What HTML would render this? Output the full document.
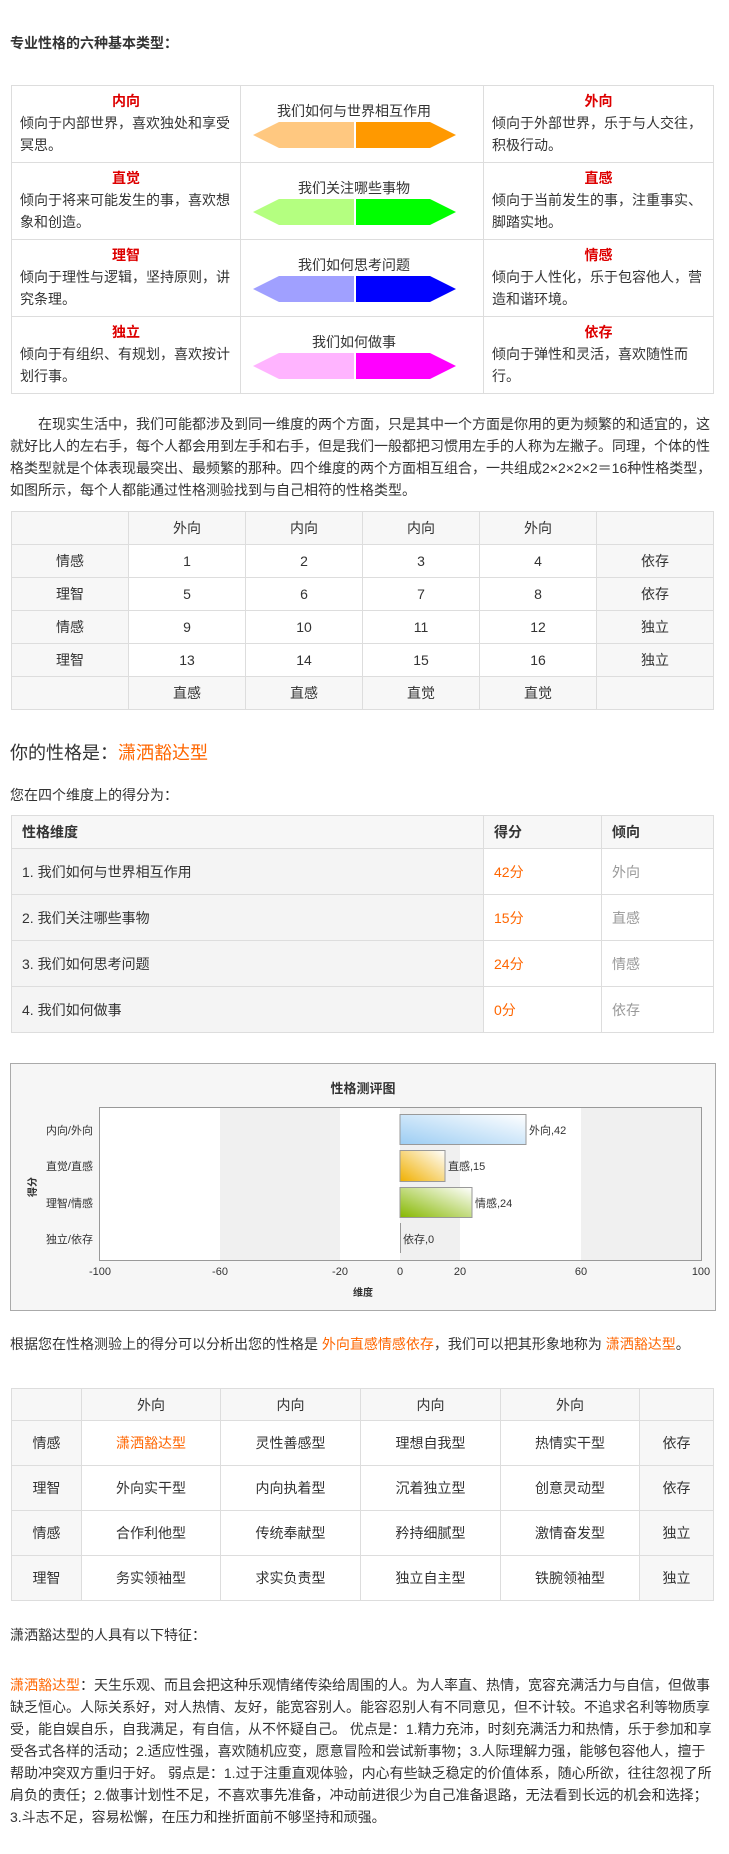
<!DOCTYPE html>
<html><head><meta charset="utf-8">
<style>
*{margin:0;padding:0;box-sizing:border-box}
body{width:729px;height:1854px;background:#fff;position:relative;font-family:"Liberation Sans","Noto Sans CJK SC",sans-serif;font-size:14px;color:#333;overflow:hidden}
.a{position:absolute}
table{border-collapse:collapse;position:absolute;table-layout:fixed}
td{border:1px solid #ddd}
.o{color:#f60}
.red{color:#d00;font-weight:bold}
.t1 td{vertical-align:top;padding:4px 8px 0;line-height:22px;height:77px}
.t1 td.c{padding:0}
.g{background:#f7f7f7}
.ctr td{text-align:center}
.cap{margin-top:16px;line-height:18px;text-align:center;margin-right:16px}
.arr{display:block;margin:2px 0 0 12px}
</style></head><body>
<div class="a" style="left:10px;top:33px;font-weight:bold;font-size:14px">专业性格的六种基本类型：</div>

<table class="t1" style="left:11px;top:85px;width:702px">
<colgroup><col style="width:229px"><col style="width:243px"><col style="width:230px"></colgroup>
<tr><td><div class="red" style="text-align:center">内向</div>倾向于内部世界，喜欢独处和享受冥思。</td>
<td class="c"><div class="cap">我们如何与世界相互作用</div><svg class="arr" width="203" height="26"><polygon points="0,13 26,0 101,0 101,26 26,26" fill="#ffc880"/><polygon points="103,0 177,0 203,13 177,26 103,26" fill="#f90"/></svg></td>
<td><div class="red" style="text-align:center">外向</div>倾向于外部世界，乐于与人交往，积极行动。</td></tr>
<tr><td><div class="red" style="text-align:center">直觉</div>倾向于将来可能发生的事，喜欢想象和创造。</td>
<td class="c"><div class="cap">我们关注哪些事物</div><svg class="arr" width="203" height="26"><polygon points="0,13 26,0 101,0 101,26 26,26" fill="#b4ff80"/><polygon points="103,0 177,0 203,13 177,26 103,26" fill="#0f0"/></svg></td>
<td><div class="red" style="text-align:center">直感</div>倾向于当前发生的事，注重事实、脚踏实地。</td></tr>
<tr><td><div class="red" style="text-align:center">理智</div>倾向于理性与逻辑，坚持原则，讲究条理。</td>
<td class="c"><div class="cap">我们如何思考问题</div><svg class="arr" width="203" height="26"><polygon points="0,13 26,0 101,0 101,26 26,26" fill="#a0a0ff"/><polygon points="103,0 177,0 203,13 177,26 103,26" fill="#00f"/></svg></td>
<td><div class="red" style="text-align:center">情感</div>倾向于人性化，乐于包容他人，营造和谐环境。</td></tr>
<tr><td><div class="red" style="text-align:center">独立</div>倾向于有组织、有规划，喜欢按计划行事。</td>
<td class="c"><div class="cap">我们如何做事</div><svg class="arr" width="203" height="26"><polygon points="0,13 26,0 101,0 101,26 26,26" fill="#ffb4ff"/><polygon points="103,0 177,0 203,13 177,26 103,26" fill="#f0f"/></svg></td>
<td><div class="red" style="text-align:center">依存</div>倾向于弹性和灵活，喜欢随性而行。</td></tr>
</table>

<div class="a" style="left:10px;top:413px;width:705px;line-height:22px;text-indent:28px">在现实生活中，我们可能都涉及到同一维度的两个方面，只是其中一个方面是你用的更为频繁的和适宜的，这就好比人的左右手，每个人都会用到左手和右手，但是我们一般都把习惯用左手的人称为左撇子。同理，个体的性格类型就是个体表现最突出、最频繁的那种。四个维度的两个方面相互组合，一共组成2×2×2×2＝16种性格类型，如图所示，每个人都能通过性格测验找到与自己相符的性格类型。</div>

<table class="ctr" style="left:11px;top:511px;width:702px">
<colgroup><col span="6" style="width:117px"></colgroup>
<tr style="height:33px"><td class="g"></td><td class="g">外向</td><td class="g">内向</td><td class="g">内向</td><td class="g">外向</td><td class="g"></td></tr>
<tr style="height:33px"><td class="g">情感</td><td>1</td><td>2</td><td>3</td><td>4</td><td class="g">依存</td></tr>
<tr style="height:33px"><td class="g">理智</td><td>5</td><td>6</td><td>7</td><td>8</td><td class="g">依存</td></tr>
<tr style="height:33px"><td class="g">情感</td><td>9</td><td>10</td><td>11</td><td>12</td><td class="g">独立</td></tr>
<tr style="height:33px"><td class="g">理智</td><td>13</td><td>14</td><td>15</td><td>16</td><td class="g">独立</td></tr>
<tr style="height:33px"><td class="g"></td><td class="g">直感</td><td class="g">直感</td><td class="g">直觉</td><td class="g">直觉</td><td class="g"></td></tr>
</table>

<div class="a" style="left:10px;top:740px;font-size:18px;line-height:26px">你的性格是：<span class="o">潇洒豁达型</span></div>
<div class="a" style="left:10px;top:785px">您在四个维度上的得分为：</div>

<table style="left:11px;top:815px;width:702px">
<colgroup><col style="width:472px"><col style="width:118px"><col style="width:112px"></colgroup>
<tr style="height:33px" class="g"><td style="padding-left:10px;font-weight:bold">性格维度</td><td style="padding-left:10px;font-weight:bold">得分</td><td style="padding-left:10px;font-weight:bold">倾向</td></tr>
<tr style="height:46px"><td style="padding-left:10px;background:#f4f4f4">1. 我们如何与世界相互作用</td><td class="o" style="padding-left:10px">42分</td><td style="padding-left:10px;color:#999">外向</td></tr>
<tr style="height:46px"><td style="padding-left:10px;background:#f4f4f4">2. 我们关注哪些事物</td><td class="o" style="padding-left:10px">15分</td><td style="padding-left:10px;color:#999">直感</td></tr>
<tr style="height:46px"><td style="padding-left:10px;background:#f4f4f4">3. 我们如何思考问题</td><td class="o" style="padding-left:10px">24分</td><td style="padding-left:10px;color:#999">情感</td></tr>
<tr style="height:46px"><td style="padding-left:10px;background:#f4f4f4">4. 我们如何做事</td><td class="o" style="padding-left:10px">0分</td><td style="padding-left:10px;color:#999">依存</td></tr>
</table>

<div class="a" style="left:10px;top:1063px;width:706px;height:248px;background:#f6f6f6;border:1px solid #aaa"></div>
<svg class="a" style="left:0;top:1060px" width="729" height="250" font-family="Liberation Sans,Noto Sans CJK SC,sans-serif">
<defs>
<linearGradient id="gb" x1="0" y1="1" x2="1" y2="0"><stop offset="0" stop-color="#9ccdf3"/><stop offset="1" stop-color="#fff"/></linearGradient>
<linearGradient id="gy" x1="0" y1="1" x2="1" y2="0"><stop offset="0" stop-color="#f0b000"/><stop offset="1" stop-color="#fff"/></linearGradient>
<linearGradient id="gg" x1="0" y1="1" x2="1" y2="0"><stop offset="0" stop-color="#86b800"/><stop offset="1" stop-color="#fff"/></linearGradient>
</defs>
<text x="363" y="33" text-anchor="middle" font-size="13" font-weight="bold" fill="#333">性格测评图</text>
<rect x="100" y="48" width="601" height="152" fill="#fff"/>
<rect x="220" y="48" width="120" height="152" fill="#f0f0f0"/>
<rect x="400" y="48" width="60" height="152" fill="#f0f0f0"/>
<rect x="581" y="48" width="120" height="152" fill="#f0f0f0"/>
<rect x="99.5" y="47.5" width="602" height="153" fill="none" stroke="#999"/>
<rect x="400" y="54.5" width="126" height="30" fill="url(#gb)" stroke="#999"/>
<rect x="400" y="90.5" width="45" height="31" fill="url(#gy)" stroke="#999"/>
<rect x="400" y="127.5" width="72" height="30" fill="url(#gg)" stroke="#999"/>
<line x1="400.5" y1="163" x2="400.5" y2="193" stroke="#999"/>
<g font-size="11" fill="#333">
<text x="93" y="74" text-anchor="end">内向/外向</text>
<text x="93" y="110" text-anchor="end">直觉/直感</text>
<text x="93" y="147" text-anchor="end">理智/情感</text>
<text x="93" y="183" text-anchor="end">独立/依存</text>
<text x="529" y="74">外向,42</text>
<text x="448" y="110">直感,15</text>
<text x="475" y="147">情感,24</text>
<text x="403" y="183">依存,0</text>
<g text-anchor="middle"><text x="100" y="215">-100</text><text x="220" y="215">-60</text><text x="340" y="215">-20</text><text x="400" y="215">0</text><text x="460" y="215">20</text><text x="581" y="215">60</text><text x="701" y="215">100</text></g>
<text x="363" y="236" text-anchor="middle" font-weight="bold" font-size="10">维度</text>
<text transform="translate(36,127) rotate(-90)" text-anchor="middle" font-weight="bold" font-size="10">得分</text>
</g>
</svg>

<div class="a" style="left:10px;top:1334px">根据您在性格测验上的得分可以分析出您的性格是 <span class="o">外向直感情感依存</span>，我们可以把其形象地称为 <span class="o">潇洒豁达型</span>。</div>

<table class="ctr" style="left:11px;top:1388px;width:702px">
<colgroup><col style="width:70px"><col style="width:139px"><col style="width:140px"><col style="width:140px"><col style="width:139px"><col style="width:74px"></colgroup>
<tr style="height:32px"><td class="g"></td><td class="g">外向</td><td class="g">内向</td><td class="g">内向</td><td class="g">外向</td><td class="g"></td></tr>
<tr style="height:45px"><td class="g">情感</td><td class="o">潇洒豁达型</td><td>灵性善感型</td><td>理想自我型</td><td>热情实干型</td><td class="g">依存</td></tr>
<tr style="height:45px"><td class="g">理智</td><td>外向实干型</td><td>内向执着型</td><td>沉着独立型</td><td>创意灵动型</td><td class="g">依存</td></tr>
<tr style="height:45px"><td class="g">情感</td><td>合作利他型</td><td>传统奉献型</td><td>矜持细腻型</td><td>激情奋发型</td><td class="g">独立</td></tr>
<tr style="height:45px"><td class="g">理智</td><td>务实领袖型</td><td>求实负责型</td><td>独立自主型</td><td>铁腕领袖型</td><td class="g">独立</td></tr>
</table>

<div class="a" style="left:10px;top:1625px">潇洒豁达型的人具有以下特征：</div>
<div class="a" style="left:10px;top:1674px;width:706px;line-height:22px"><span class="o">潇洒豁达型</span>：天生乐观、而且会把这种乐观情绪传染给周围的人。为人率直、热情，宽容充满活力与自信，但做事缺乏恒心。人际关系好，对人热情、友好，能宽容别人。能容忍别人有不同意见，但不计较。不追求名利等物质享受，能自娱自乐，自我满足，有自信，从不怀疑自己。 优点是：1.精力充沛，时刻充满活力和热情，乐于参加和享受各式各样的活动；2.适应性强，喜欢随机应变，愿意冒险和尝试新事物；3.人际理解力强，能够包容他人，擅于帮助冲突双方重归于好。 弱点是：1.过于注重直观体验，内心有些缺乏稳定的价值体系，随心所欲，往往忽视了所肩负的责任；2.做事计划性不足，不喜欢事先准备，冲动前进很少为自己准备退路，无法看到长远的机会和选择；3.斗志不足，容易松懈，在压力和挫折面前不够坚持和顽强。</div>
</body></html>
